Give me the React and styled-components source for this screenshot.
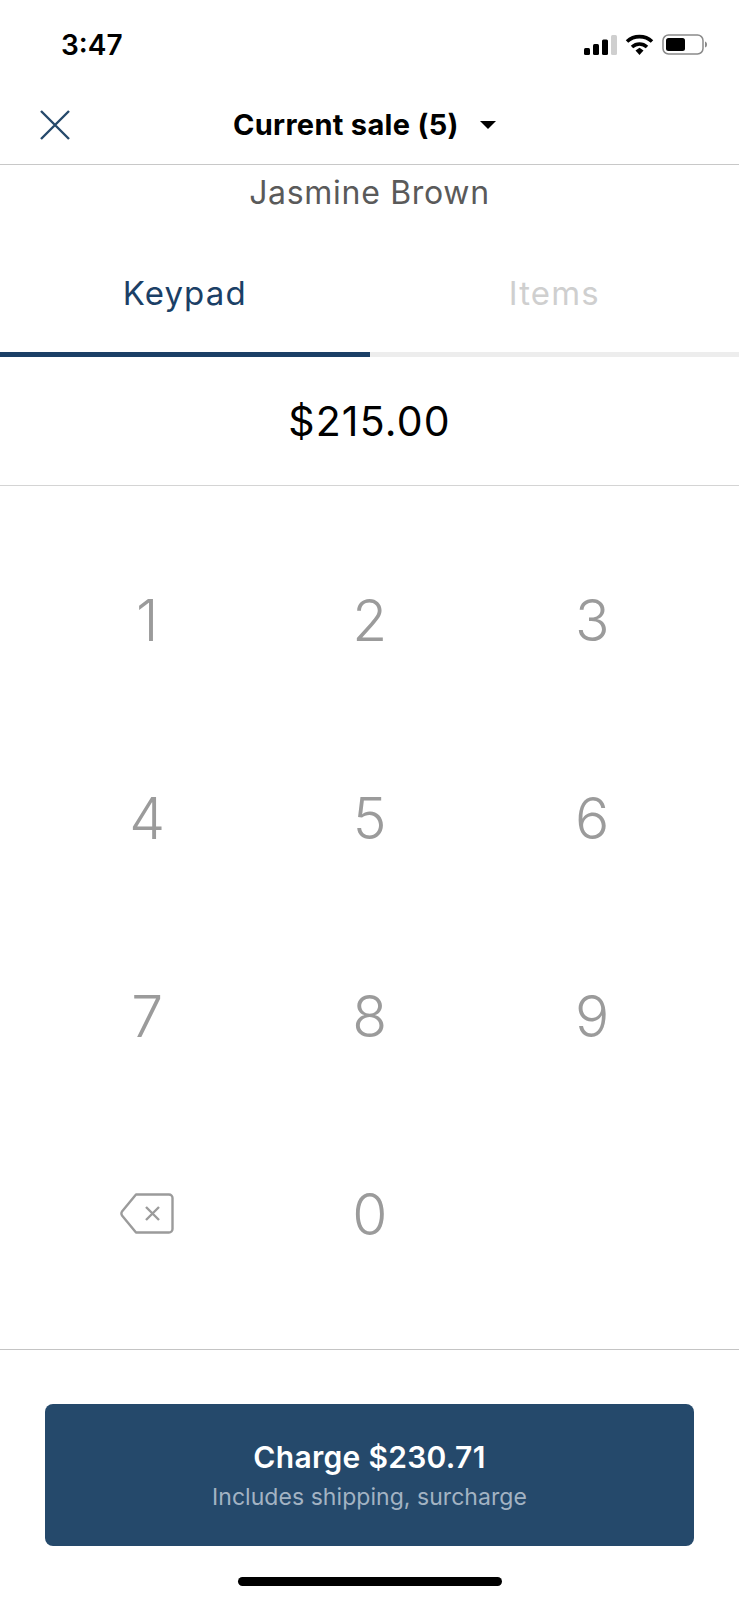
import React from "react";
import styled, { createGlobalStyle } from "styled-components";

const navy = "#25496b";
const keys = ["1", "2", "3", "4", "5", "6", "7", "8", "9"];

const GlobalStyle = createGlobalStyle`
  html, body {
    margin: 0;
    padding: 0;
    background: #fff;
  }
  body {
    font-family: Inter, "Liberation Sans", sans-serif;
  }
`;

const Screen = styled.div`
  width: 739px;
  height: 1600px;
  display: flex;
  flex-direction: column;
  overflow: hidden;
  background: #fff;
`;

const StatusBar = styled.div`
  height: 89px;
  box-sizing: border-box;
  padding: 30px 32px 0 61px;
  display: flex;
  justify-content: space-between;
  align-items: flex-start;
`;

const Clock = styled.span`
  font-size: 28px;
  line-height: 30px;
  font-weight: 600;
  color: #000;
`;

const StatusIcons = styled.div`
  display: flex;
  align-items: center;
  gap: 8px;
  margin-top: 4px;
`;

const Header = styled.div`
  height: 76px;
  box-sizing: border-box;
  border-bottom: 1px solid #c8c8c8;
  padding: 0 0 4px;
  display: flex;
  align-items: center;
  position: relative;
`;

const CloseButton = styled.button`
  position: absolute;
  left: 39px;
  top: 20px;
  padding: 0;
  border: 0;
  background: none;
  display: flex;
`;

const Title = styled.div`
  margin-left: 233px;
  display: flex;
  align-items: center;
  gap: 21px;
  font-size: 29px;
  letter-spacing: 0.3px;
  line-height: 34px;
  font-weight: 700;
  color: #000;
`;

const Caret = styled.span`
  width: 0;
  height: 0;
  border-left: 8px solid transparent;
  border-right: 8px solid transparent;
  border-top: 8px solid #000;
`;

const Customer = styled.div`
  height: 50px;
  text-align: center;
  font-size: 32px;
  letter-spacing: 0.7px;
  line-height: 56px;
  color: #5a5a5a;
`;

const Tabs = styled.div`
  height: 142px;
  box-sizing: border-box;
  display: grid;
  grid-template-columns: 1fr 1fr;
`;

const Tab = styled.div`
  padding-top: 58px;
  text-align: center;
  font-size: 33px;
  letter-spacing: 1.1px;
  line-height: 40px;
  color: ${(p) => (p.$active ? "#1b3f66" : "#cfcfcf")};
  border-bottom: 5px solid ${(p) => (p.$active ? "#1b3f66" : "#ededed")};
`;

const Amount = styled.div`
  height: 129px;
  box-sizing: border-box;
  border-bottom: 1px solid #d4d4d4;
  display: flex;
  align-items: center;
  justify-content: center;
  font-size: 41px;
  letter-spacing: 1.2px;
  color: #000;
`;

const Keypad = styled.div`
  height: 864px;
  box-sizing: border-box;
  padding: 35px 36px 0;
  border-bottom: 1px solid #c4c4c4;
  display: grid;
  grid-template-columns: repeat(3, 222.5px);
  grid-auto-rows: 198px;
`;

const Key = styled.div`
  display: flex;
  align-items: center;
  justify-content: center;
  font-size: 57px;
  font-weight: 300;
  color: #9b9b9b;
`;

const BackspaceGlyph = styled.svg`
  margin-bottom: 2px;
`;

const Footer = styled.div`
  padding: 54px 45px 0;
`;

const ChargeButton = styled.button`
  width: 100%;
  height: 142px;
  border: 0;
  border-radius: 8px;
  padding: 0;
  background: ${navy};
  display: flex;
  flex-direction: column;
  align-items: center;
  justify-content: center;
  font-family: inherit;
`;

const ChargeLabel = styled.span`
  font-size: 30px;
  letter-spacing: 0.3px;
  line-height: 36px;
  font-weight: 600;
  color: #fff;
`;

const ChargeNote = styled.span`
  margin-top: 8px;
  font-size: 23px;
  letter-spacing: 0.05px;
  line-height: 28px;
  color: #a3b3c3;
`;

const HomeBar = styled.div`
  width: 264px;
  height: 9px;
  margin: 31px auto 0;
  border-radius: 5px;
  background: #000;
`;

const SignalIcon = () => (
  <svg width="33" height="20" viewBox="0 0 33 20">
    <rect x="0" y="13" width="6" height="7" rx="1.5" fill="#000" />
    <rect x="9" y="9" width="6" height="11" rx="1.5" fill="#000" />
    <rect x="18" y="4.500" width="6" height="15.500" rx="1.5" fill="#000" />
    <rect x="27" y="0" width="6" height="20" rx="1.5" fill="#cfcfcf" />
  </svg>
);

const WifiIcon = () => (
  <svg width="29" height="21" viewBox="0 0 29 21">
    <path d="M2 7.500C9 1 20 1 27 7.500" fill="none" stroke="#000" strokeWidth="3.600" />
    <path d="M7 13C11.500 9 17.500 9 22 13" fill="none" stroke="#000" strokeWidth="3.600" />
    <path d="M10.500 16.500L14.500 13.800L18.500 16.500L14.500 21Z" fill="#000" />
  </svg>
);

const BatteryIcon = () => (
  <svg width="45" height="21" viewBox="0 0 45 21">
    <rect x="1" y="1" width="40" height="19" rx="5.500" fill="none" stroke="#8a8a8a" strokeWidth="1.500" />
    <rect x="4" y="4" width="19" height="13" rx="2.500" fill="#000" />
    <path d="M43 7.500C44.500 8 45 9 45 10.500C45 12 44.500 13 43 13.500Z" fill="#8a8a8a" />
  </svg>
);

const CloseIcon = () => (
  <svg width="32" height="32" viewBox="0 0 32 32">
    <path d="M2 2L30 30M30 2L2 30" fill="none" stroke={navy} strokeWidth="2.400" />
  </svg>
);

const BackspaceIcon = () => (
  <BackspaceGlyph width="54" height="41" viewBox="0 0 54 41">
    <path
      d="M16 1.500H49A3.500 3.500 0 0 1 52.500 5V36A3.500 3.500 0 0 1 49 39.500H16L2 22.500Q0.800 20.500 2 18.500Z"
      fill="none"
      stroke="#9b9b9b"
      strokeWidth="2.400"
      strokeLinejoin="round"
    />
    <path d="M26 14L39 27M39 14L26 27" fill="none" stroke="#9b9b9b" strokeWidth="2.400" />
  </BackspaceGlyph>
);

const App = () => {
  return (
    <Screen>
      <GlobalStyle />
      <StatusBar>
        <Clock>3:47</Clock>
        <StatusIcons>
          <SignalIcon />
          <WifiIcon />
          <BatteryIcon />
        </StatusIcons>
      </StatusBar>
      <Header>
        <CloseButton>
          <CloseIcon />
        </CloseButton>
        <Title>
          Current sale (5)
          <Caret />
        </Title>
      </Header>
      <Customer>Jasmine Brown</Customer>
      <Tabs>
        <Tab $active>Keypad</Tab>
        <Tab>Items</Tab>
      </Tabs>
      <Amount>$215.00</Amount>
      <Keypad>
        {keys.map((key) => (
          <Key key={key}>{key}</Key>
        ))}
        <Key>
          <BackspaceIcon />
        </Key>
        <Key>0</Key>
      </Keypad>
      <Footer>
        <ChargeButton>
          <ChargeLabel>Charge $230.71</ChargeLabel>
          <ChargeNote>Includes shipping, surcharge</ChargeNote>
        </ChargeButton>
        <HomeBar />
      </Footer>
    </Screen>
  );
};

export default App;
